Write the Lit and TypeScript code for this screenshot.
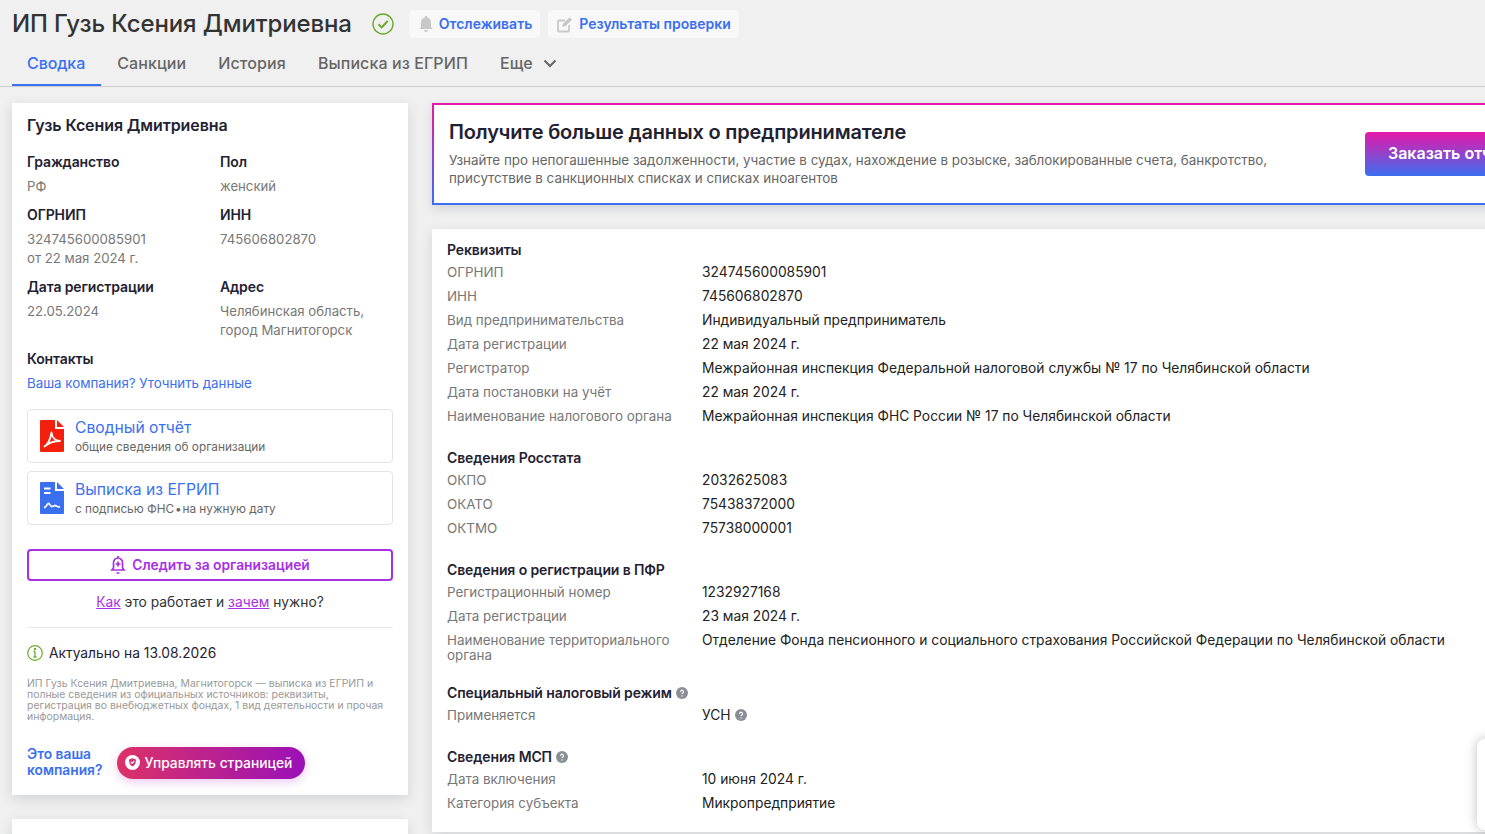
import { LitElement, html, css, svg } from "lit";
import { customElement } from "lit/decorators.js";

type Row = { label: string; value: string; hint?: boolean };
type Section = { title: string; hint?: boolean; rows: Row[] };

const sections: Section[] = [
  {
    title: "Реквизиты",
    rows: [
      { label: "ОГРНИП", value: "324745600085901" },
      { label: "ИНН", value: "745606802870" },
      { label: "Вид предпринимательства", value: "Индивидуальный предприниматель" },
      { label: "Дата регистрации", value: "22 мая 2024 г." },
      { label: "Регистратор", value: "Межрайонная инспекция Федеральной налоговой службы № 17 по Челябинской области" },
      { label: "Дата постановки на учёт", value: "22 мая 2024 г." },
      { label: "Наименование налогового органа", value: "Межрайонная инспекция ФНС России № 17 по Челябинской области" },
    ],
  },
  {
    title: "Сведения Росстата",
    rows: [
      { label: "ОКПО", value: "2032625083" },
      { label: "ОКАТО", value: "75438372000" },
      { label: "ОКТМО", value: "75738000001" },
    ],
  },
  {
    title: "Сведения о регистрации в ПФР",
    rows: [
      { label: "Регистрационный номер", value: "1232927168" },
      { label: "Дата регистрации", value: "23 мая 2024 г." },
      { label: "Наименование территориального органа", value: "Отделение Фонда пенсионного и социального страхования Российской Федерации по Челябинской области" },
    ],
  },
  {
    title: "Специальный налоговый режим",
    hint: true,
    rows: [{ label: "Применяется", value: "УСН", hint: true }],
  },
  {
    title: "Сведения МСП",
    hint: true,
    rows: [
      { label: "Дата включения", value: "10 июня 2024 г." },
      { label: "Категория субъекта", value: "Микропредприятие" },
    ],
  },
];

const hintIcon = html`<svg class="hint" viewBox="0 0 12 12" width="12" height="12">
  <circle cx="6" cy="6" r="6" fill="#8a8f96"></circle>
  <path d="M4.5 4.7a1.5 1.5 0 1 1 2.3 1.3c-.5.3-.8.6-.8 1.1" fill="none" stroke="#fff" stroke-width="1.2"></path>
  <circle cx="6" cy="9" r=".7" fill="#fff"></circle>
</svg>`;

const fileShape = svg`<path d="M1 0h14v9h9v22a1 1 0 0 1-1 1H1a1 1 0 0 1-1-1V1a1 1 0 0 1 1-1z"></path><path d="M17 0l7 7h-7z"></path>`;

@customElement("app-root")
export class AppRoot extends LitElement {
  static styles = css`
    :host {
      display: block;
      width: 1485px;
      height: 834px;
      overflow: hidden;
      position: relative;
      background: #f0f0f0;
      color: #1f2233;
      font-family: Inter, "Noto Sans", sans-serif;
      font-size: 14px;
    }
    a { color: #3a6ff0; text-decoration: none; }
    .head { display: flex; align-items: center; padding: 10px 12px 0; height: 28px; }
    h1 { margin: 0; font-size: 24px; line-height: 28px; font-weight: 500; color: #333; letter-spacing: -0.12px; white-space: nowrap; }
    .check { margin: 0 15px 0 20px; flex: none; }
    .tool {
      display: flex; align-items: center; gap: 5px; height: 28px; box-sizing: border-box;
      padding: 0 8px 0 9px; background: #f8f8f8; border-radius: 4px; margin-right: 8px;
      color: #3a6ff0; font-size: 14px; font-weight: 600; white-space: nowrap;
    }
    .tool span { margin-bottom: 2px; }
    .tabs { display: flex; margin-top: 10px; padding-left: 12px; height: 38px; border-bottom: 1px solid #ccc; box-sizing: content-box; }
    .tab { padding: 6px 16px 0; font-size: 16px; line-height: 18px; font-weight: 500; letter-spacing: 0.1px; color: #666; box-sizing: border-box; height: 38px; white-space: nowrap; display: flex; gap: 10px; }
    .tab.on { color: #3a6ff0; border-bottom: 2px solid #3a6ff0; padding-left: 15px; letter-spacing: -0.1px; }
    .tab svg { margin-top: 5px; }
    .main { display: grid; grid-template-columns: 396px 1100px; column-gap: 24px; padding: 16px 12px 0; }
    .side { display: flex; flex-direction: column; gap: 24px; }
    .card { background: #fff; box-shadow: 0 4px 12px rgba(60, 70, 80, 0.16); }
    .about { height: 692px; box-sizing: border-box; padding: 13px 15px 0; }
    .name { font-size: 16px; line-height: 18px; font-weight: 600; letter-spacing: -0.1px; }
    .facts { display: grid; grid-template-columns: 193px 1fr; margin-top: 20px; }
    .fact { height: 53px; }
    .fact.tall { height: 72px; }
    .k { font-size: 14px; line-height: 16px; font-weight: 600; letter-spacing: -0.12px; }
    .v { margin-top: 7px; font-size: 13.2px; line-height: 19px; color: #777; }
    .contact { color: #3a6ff0; font-size: 13.3px; line-height: 16px; margin: 8px 0 18px; display: block; }
    .doc {
      display: flex; align-items: center; gap: 11px; box-sizing: border-box; height: 54px; padding: 0 12px;
      border: 1px solid #e3e3e3; border-radius: 4px; margin-bottom: 8px;
    }
    .doc svg { flex: none; }
    .doc b { display: block; margin-top: 1px; font-weight: 400; font-size: 15.7px; line-height: 20px; color: #3a6ff0; }
    .sub { display: block; font-size: 11.8px; line-height: 16px; color: #666; margin-top: 1px; }
    .dot { font-style: normal; margin: 0 -2.5px; }
    .follow {
      display: flex; align-items: center; justify-content: center; gap: 6px; height: 32px; box-sizing: border-box;
      margin-top: 24px; padding-bottom: 1px; border: 2px solid #a92fe6; border-radius: 4px; color: #a92fe6; font-weight: 600; font-size: 13.8px;
    }
    .how { text-align: center; margin-top: 13px; line-height: 17px; font-size: 13.8px; color: #333; padding-bottom: 16px; border-bottom: 1px solid #e8e8e8; }
    .how a { color: #a92fe6; text-decoration: underline; }
    .fresh { display: flex; align-items: center; gap: 6px; margin-top: 16px; line-height: 18px; font-size: 13.8px; color: #1f2233; }
    .desc { margin: 16px 0 0; font-size: 10.45px; line-height: 11px; color: #999; }
    .own { display: flex; align-items: center; gap: 15px; margin-top: 25px; }
    .own a { font-weight: 600; line-height: 16px; font-size: 13.8px; position: relative; top: -1px; }
    .pill {
      display: flex; align-items: center; gap: 4px; height: 32px; width: 188px; box-sizing: border-box; padding: 0 0 1px 8px;
      border-radius: 16px; color: #fff; font-weight: 500; font-size: 13.8px; white-space: nowrap;
      background: linear-gradient(90deg, #dc3267, #9a10b8);
      box-shadow: 0 3px 10px rgba(170, 40, 190, 0.25);
    }
    .stub { height: 60px; }
    .content { display: flex; flex-direction: column; gap: 24px; }
    .promo {
      height: 102px; box-sizing: border-box; padding: 15px 15px 0; position: relative; display: flex;
      border: 2px solid transparent;
      background: linear-gradient(#fff, #fff) padding-box, linear-gradient(180deg, #e817a8, #3a6ff0) border-box;
      box-shadow: 0 4px 10px rgba(60, 70, 80, 0.16);
    }
    .promo h2 { margin: 0; font-size: 20px; line-height: 24px; font-weight: 600; color: #1f2233; letter-spacing: -0.17px; white-space: nowrap; }
    .promo p { margin: 7px 0 0; width: 860px; font-size: 13.4px; line-height: 18px; color: #666; }
    .order {
      flex: none; width: 180px; height: 44px; margin: 12px 0 0 56px; border-radius: 4px; box-sizing: border-box; padding: 11px 0 0 23px;
      color: #fff; font-size: 16px; line-height: 20px; font-weight: 600; white-space: nowrap;
      background: linear-gradient(180deg, #e817a8, #3a6ff0);
    }
    .data { height: 603px; box-sizing: border-box; padding: 13px 15px 0; }
    .sec { margin-bottom: 17px; }
    .sec h3 { margin: 0 0 7px; display: flex; align-items: center; gap: 4px; font-size: 14px; line-height: 16px; font-weight: 600; letter-spacing: -0.12px; }
    .row { display: grid; grid-template-columns: 255px 1fr; min-height: 24px; line-height: 15px; padding-bottom: 5px; box-sizing: border-box; }
    .row .l { color: #777; padding-right: 20px; font-size: 13.4px; }
    .row .r { color: #222; display: flex; gap: 4px; align-items: center; align-self: start; font-size: 13.8px; }
    .row .r .hint { margin-top: -2px; }
    .hint { flex: none; }
    .widget {
      position: absolute; left: 1477px; top: 739px; width: 60px; height: 91px; background: #fff; border-radius: 8px;
      box-shadow: 0 0 12px rgba(0, 0, 0, 0.25);
    }
  `;

  renderSection(s: Section) {
    return html`<div class="sec">
      <h3>${s.title}${s.hint ? hintIcon : ""}</h3>
      ${s.rows.map(
        (r) => html`<div class="row">
          <div class="l">${r.label}</div>
          <div class="r">${r.value}${r.hint ? hintIcon : ""}</div>
        </div>`
      )}
    </div>`;
  }

  render() {
    return html`
      <div class="head">
        <h1>ИП Гузь Ксения Дмитриевна</h1>
        <svg class="check" width="22" height="22" viewBox="0 0 22 22" fill="none" stroke="#6aab2e" stroke-width="1.4">
          <circle cx="11" cy="11" r="10"></circle>
          <path d="M6.5 11.2l3.2 3.2 6-6.4" stroke-width="2"></path>
        </svg>
        <div class="tool">
          <svg width="16" height="16" viewBox="0 0 16 16" fill="#c8c8c8"><path d="M8 0a1.4 1.4 0 0 1 1.4 1.5C11.6 2.2 13 4 13 6.5V11l1.6 2H1.4L3 11V6.5c0-2.500 1.400-4.300 3.600-5A1.400 1.400 0 0 1 8 0zM6 14h4a2 2 0 0 1-4 0z"></path></svg>
          <span>Отслеживать</span>
        </div>
        <div class="tool">
          <svg width="17" height="17" viewBox="0 0 17 17" fill="none" stroke="#c8c8c8" stroke-width="1.800"><path d="M8 4.500H2a1 1 0 0 0-1 1v9a1 1 0 0 0 1 1h9a1 1 0 0 0 1-1V9"></path><path d="M5 11l.8-3L12.500 1.200l2.600 2.600-6.800 6.500z" fill="#c8c8c8" stroke="none"></path></svg>
          <span>Результаты проверки</span>
        </div>
      </div>
      <nav class="tabs">
        <div class="tab on">Сводка</div>
        <div class="tab">Санкции</div>
        <div class="tab">История</div>
        <div class="tab">Выписка из ЕГРИП</div>
        <div class="tab">Еще
          <svg width="14" height="9" viewBox="0 0 14 9" fill="none" stroke="#666" stroke-width="2"><path d="M1.500 1.500L7 7l5.500-5.500"></path></svg>
        </div>
      </nav>
      <div class="main">
        <div class="side">
          <section class="card about">
            <div class="name">Гузь Ксения Дмитриевна</div>
            <div class="facts">
              <div class="fact"><div class="k">Гражданство</div><div class="v">РФ</div></div>
              <div class="fact"><div class="k">Пол</div><div class="v">женский</div></div>
              <div class="fact tall"><div class="k">ОГРНИП</div><div class="v">324745600085901<br />от 22 мая 2024 г.</div></div>
              <div class="fact tall"><div class="k">ИНН</div><div class="v">745606802870</div></div>
              <div class="fact tall"><div class="k">Дата регистрации</div><div class="v">22.05.2024</div></div>
              <div class="fact tall"><div class="k">Адрес</div><div class="v">Челябинская область,<br />город Магнитогорск</div></div>
            </div>
            <div class="k">Контакты</div>
            <a class="contact">Ваша компания? Уточнить данные</a>
            <div class="doc">
              <svg width="24" height="32" viewBox="0 0 24 32" fill="#f4200c">${fileShape}
                <path d="M4.500 26.500c3-2 6-8 7-14 .5 5 3 8 8.500 8.500-6 0-11.500 2-15.500 5.500z" fill="none" stroke="#fff" stroke-width="1.800" stroke-linejoin="round"></path>
              </svg>
              <div><b>Сводный отчёт</b><span class="sub">общие сведения об организации</span></div>
            </div>
            <div class="doc">
              <svg width="24" height="32" viewBox="0 0 24 32" fill="#3a6ff0">${fileShape}
                <path d="M4 6.500h6.500M4 11h6.500" stroke="#fff" stroke-width="2"></path>
                <path d="M4 25.500c2.500 0 3-4 4.500-4s1.500 3 3.500 3 2-1 3-1 2 1.500 5 1.500" fill="none" stroke="#fff" stroke-width="1.800"></path>
              </svg>
              <div><b>Выписка из ЕГРИП</b><span class="sub">с подписью ФНС <i class="dot">•</i> на нужную дату</span></div>
            </div>
            <div class="follow">
              <svg width="16" height="18" viewBox="0 0 16 18" fill="none" stroke="#a92fe6" stroke-width="1.700"><path d="M8 0v2M8 2a4.500 4.500 0 0 1 4.500 4.500V12l1.500 2H2l1.500-2V6.500A4.500 4.500 0 0 1 8 2zM6.500 17h3M8 5.500v5M5.500 8h5"></path></svg>
              Следить за организацией
            </div>
            <div class="how"><a>Как</a> это работает и <a>зачем</a> нужно?</div>
            <div class="fresh">
              <svg width="16" height="16" viewBox="0 0 16 16" fill="none" stroke="#6aab2e" stroke-width="1.200"><circle cx="8" cy="8" r="7.300"></circle><path d="M8 6.500V12M6.500 12h3M6.500 6.500H8" stroke-width="1.300"></path><circle cx="8" cy="4" r=".6"></circle></svg>
              Актуально на 13.08.2026
            </div>
            <p class="desc">ИП Гузь Ксения Дмитриевна, Магнитогорск — выписка из ЕГРИП и полные сведения из официальных источников: реквизиты, регистрация во внебюджетных фондах, 1 вид деятельности и прочая информация.</p>
            <div class="own">
              <a>Это ваша<br />компания?</a>
              <div class="pill">
                <svg width="15" height="15" viewBox="0 0 15 15"><circle cx="7.500" cy="7.500" r="7.500" fill="#fff"></circle><path d="M7.500 3.200l3.500 1.200c0 3.500-1 5.800-3.500 7.200C5 10.200 4 7.900 4 4.400z" fill="#d4307a"></path><path d="M5.800 7l1.300 1.300 2.200-2.300" fill="none" stroke="#fff" stroke-width="1.100"></path></svg>
                Управлять страницей
              </div>
            </div>
          </section>
          <section class="card stub"></section>
        </div>
        <div class="content">
          <section class="promo">
            <div>
              <h2>Получите больше данных о предпринимателе</h2>
              <p>Узнайте про непогашенные задолженности, участие в судах, нахождение в розыске, заблокированные счета, банкротство, присутствие в санкционных списках и списках иноагентов</p>
            </div>
            <div class="order">Заказать отчёт</div>
          </section>
          <section class="card data">${sections.map((s) => this.renderSection(s))}</section>
        </div>
      </div>
      <div class="widget"></div>
    `;
  }
}
